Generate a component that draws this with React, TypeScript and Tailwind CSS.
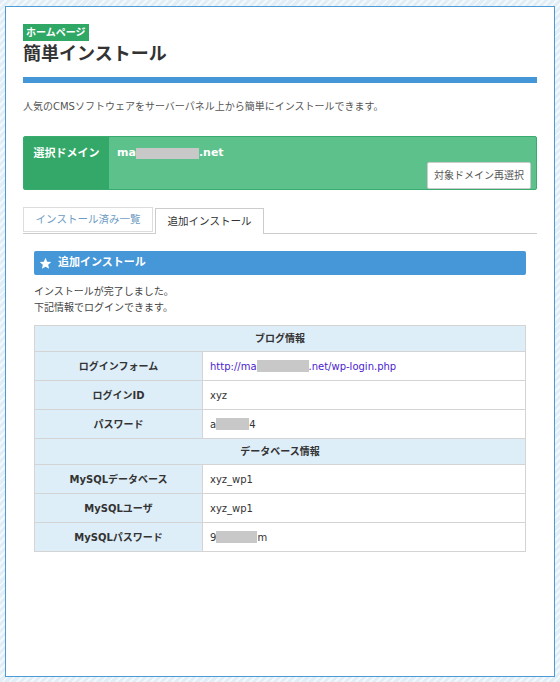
import React from "react";

const Gray = ({ className }: { className: string }) => (
  <span className={`inline-block bg-[#c8c8c8] align-middle ${className}`} />
);

const Row = ({ label, children }: { label: string; children: React.ReactNode }) => (
  <tr className="h-[29px]">
    <th className="w-[168px] border border-[#d4d4d4] bg-[#deeef8] text-center text-[10px] font-bold text-[#333]">
      {label}
    </th>
    <td className="border border-[#d4d4d4] pl-[7px] text-[10px] text-[#333]">{children}</td>
  </tr>
);

const Head = ({ title }: { title: string }) => (
  <tr className="h-[26px]">
    <th colSpan={2} className="border border-[#d4d4d4] bg-[#deeef8] text-center text-[10px] font-bold text-[#333]">
      {title}
    </th>
  </tr>
);

export default function App() {
  return (
    <div className="h-[682px] bg-[repeating-linear-gradient(135deg,#e2eef7_0px,#e2eef7_3px,#f3f8fb_3px,#f3f8fb_5px)] px-[5px] pt-[6px] font-['DejaVu_Sans','Noto_Sans_CJK_JP',sans-serif]">
      <div className="h-[671px] border border-[#4a9bd6] bg-white px-[17px] pt-[17px]">
        {/* page title */}
        <span className="block w-fit bg-[#2fa866] px-[3px] text-[10px] leading-[17px] font-bold text-white">
          ホームページ
        </span>
        <h1 className="mt-[1px] text-[18px] leading-[24px] font-bold text-[#333]">簡単インストール</h1>
        <div className="mt-[11px] h-[6px] bg-[#4496d6]" />
        <p className="mt-[17px] text-[10px] leading-[14px] text-[#555]">
          人気のCMSソフトウェアをサーバーパネル上から簡単にインストールできます。
        </p>

        {/* selected domain */}
        <div className="mt-[22px] flex h-[54px] overflow-hidden rounded-[2px] border border-[#3aab6e] bg-[#5cc18b]">
          <div className="flex w-[85px] items-start justify-center bg-[#33a869] pt-[9px] text-[11px] font-bold text-white">
            選択ドメイン
          </div>
          <div className="flex flex-1 flex-col pl-[8px] pr-[5px] pt-[8px]">
            <div className="flex items-center text-[11px] font-bold text-white">
              ma<Gray className="h-[11px] w-[63px]" />.net
            </div>
            <div className="mt-auto mb-[3px] flex justify-end">
              <button className="h-[27px] rounded-[2px] border border-[#ccc] bg-white px-[6px] text-[10px] text-[#555]">
                対象ドメイン再選択
              </button>
            </div>
          </div>
        </div>

        {/* tabs */}
        <div className="mt-[17px] flex items-end border-b border-[#ccc]">
          <div className="mb-[1px] flex h-[25px] w-[130px] items-center justify-center border border-[#ddd] text-[10.5px] text-[#6e9cc4]">
            インストール済み一覧
          </div>
          <div className="-mb-px ml-[2px] flex h-[26px] w-[109px] items-center justify-center border border-b-0 border-[#ccc] bg-white text-[10.5px] text-[#333]">
            追加インストール
          </div>
        </div>

        <div className="px-[11px]">
          <div className="mt-[17px] flex h-[24px] items-center gap-[6px] rounded-[2px] bg-[#4597d7] pl-[5px] text-[11px] font-bold text-white">
            <svg viewBox="0 0 24 24" className="h-[13px] w-[13px]" fill="white">
              <path d="M12 1.5l3.1 7.1 7.6.6-5.8 5 1.8 7.5L12 17.8l-6.7 3.9 1.8-7.5-5.8-5 7.6-.6z" />
            </svg>
            追加インストール
          </div>
          <div className="mt-[9px] text-[10px] leading-[16px] text-[#444]">
            <p>インストールが完了しました。</p>
            <p>下記情報でログインできます。</p>
          </div>

          <table className="mt-[9px] w-full border-collapse">
            <tbody>
              <Head title="ブログ情報" />
              <Row label="ログインフォーム">
                <span className="flex items-center text-[#4b22d0]">
                  http://ma<Gray className="h-[12px] w-[52px]" />.net/wp-login.php
                </span>
              </Row>
              <Row label="ログインID">xyz</Row>
              <Row label="パスワード">
                <span className="flex items-center">
                  a<Gray className="h-[12px] w-[33px]" />4
                </span>
              </Row>
              <Head title="データベース情報" />
              <Row label="MySQLデータベース">xyz_wp1</Row>
              <Row label="MySQLユーザ">xyz_wp1</Row>
              <Row label="MySQLパスワード">
                <span className="flex items-center">
                  9<Gray className="h-[12px] w-[41px]" />m
                </span>
              </Row>
            </tbody>
          </table>
        </div>
      </div>
    </div>
  );
}
